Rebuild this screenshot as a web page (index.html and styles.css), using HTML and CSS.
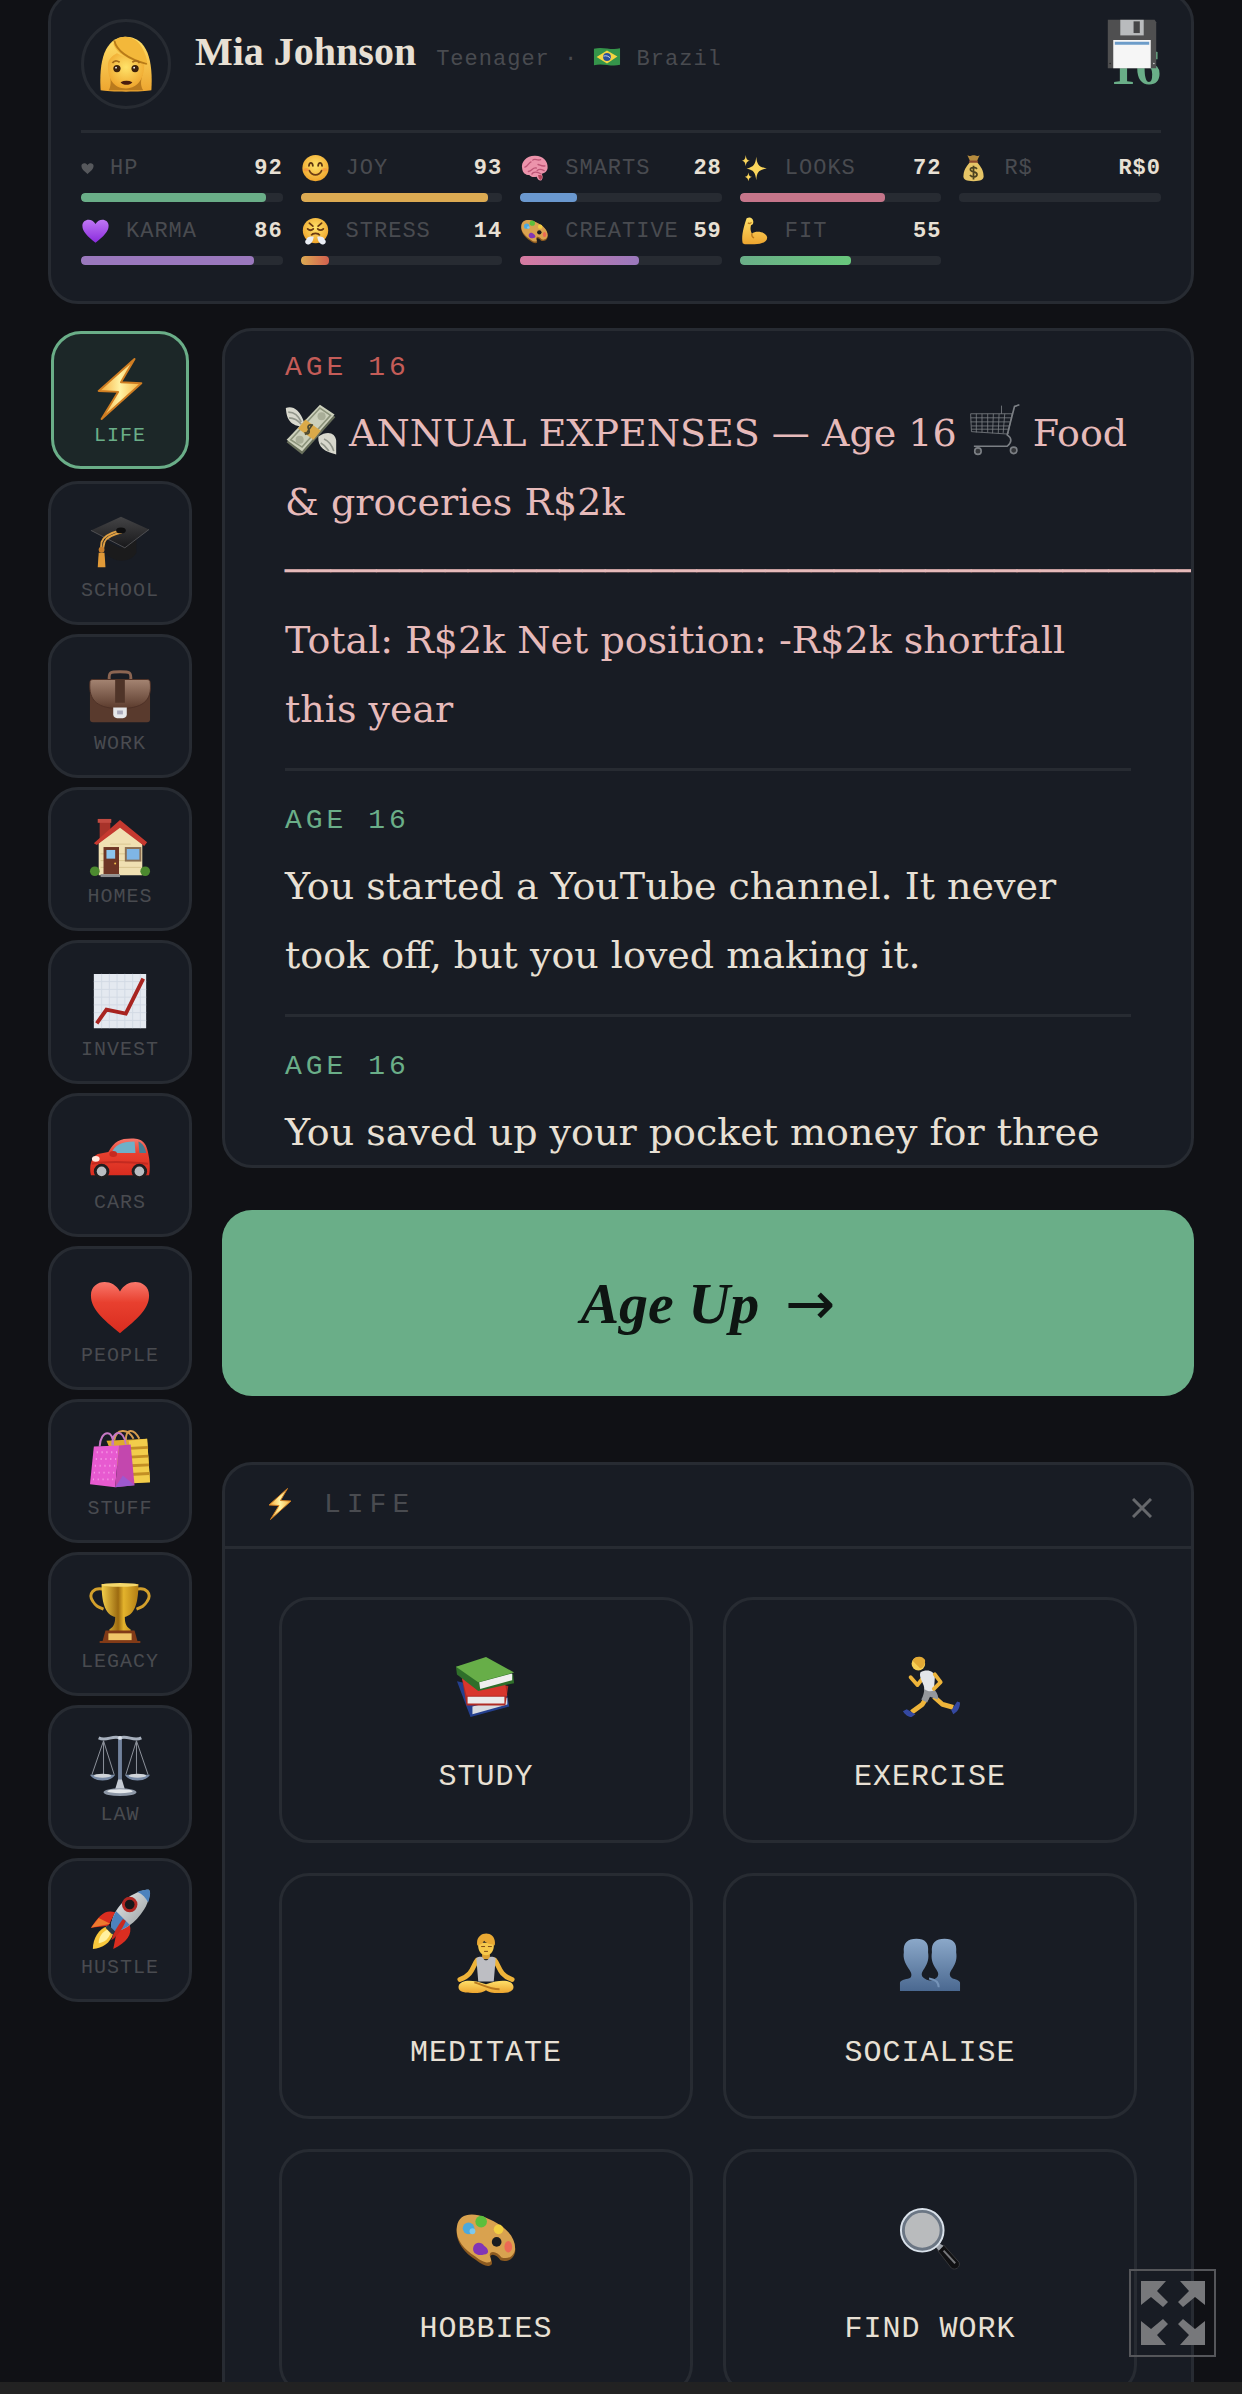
FILE: index.html
```
<!DOCTYPE html>
<html lang="en">
<head>
    <meta charset="UTF-8">
    <meta name="viewport" content="width=device-width, initial-scale=1.0">
    <title>Mia Johnson</title>
    <link rel="stylesheet" href="styles.css">
</head>
<body>

<!-- icon sprite -->
<svg class="sprite" aria-hidden="true">
<defs>
    <linearGradient id="gGold" x1="0" y1="0" x2="0" y2="1"><stop offset="0" stop-color="#ffe069"/><stop offset="1" stop-color="#eda52f"/></linearGradient>
    <linearGradient id="gCup" x1="0" y1="0" x2="1" y2="0"><stop offset="0" stop-color="#f3cf4a"/><stop offset=".45" stop-color="#9c6a10"/><stop offset=".6" stop-color="#e3b32c"/><stop offset="1" stop-color="#b37e14"/></linearGradient>
    <linearGradient id="gRed" x1="0" y1="0" x2="0" y2="1"><stop offset="0" stop-color="#f9776b"/><stop offset=".4" stop-color="#e8402f"/><stop offset="1" stop-color="#d92c1f"/></linearGradient>
    <linearGradient id="gPurple" x1="0" y1="0" x2="0" y2="1"><stop offset="0" stop-color="#c077f5"/><stop offset="1" stop-color="#8a2bdc"/></linearGradient>
    <linearGradient id="gBolt" x1="0" y1="0" x2="1" y2="0"><stop offset="0" stop-color="#f6a834"/><stop offset=".5" stop-color="#fff2a4"/><stop offset="1" stop-color="#f8b23c"/></linearGradient>
    <linearGradient id="gBag" x1="0" y1="0" x2="0" y2="1"><stop offset="0" stop-color="#a48472"/><stop offset="1" stop-color="#5b3b2d"/></linearGradient>
    <linearGradient id="gSteel" x1="0" y1="0" x2="0" y2="1"><stop offset="0" stop-color="#8ba8c9"/><stop offset="1" stop-color="#4a6890"/></linearGradient>
    <linearGradient id="gCap" x1="0" y1="0" x2="0" y2="1"><stop offset="0" stop-color="#444446"/><stop offset="1" stop-color="#18181a"/></linearGradient>
    <linearGradient id="gBody" x1="0" y1="0" x2="1" y2="1"><stop offset="0" stop-color="#f0f2f3"/><stop offset="1" stop-color="#8f9698"/></linearGradient>
    <radialGradient id="gFace" cx=".5" cy=".4" r=".6"><stop offset="0" stop-color="#ffe36a"/><stop offset="1" stop-color="#efa52c"/></radialGradient>
</defs>

<symbol id="i-woman" viewBox="0 0 64 64">
    <path d="M4 61C2 30 8 3 31 2c25 0 31 27 29 59-8 2-48 2-56 0z" fill="url(#gGold)"/>
    <path d="M14 44c2 8 1 13-1 17h38c-3-5-3-10-1-17z" fill="#b97a1d"/>
    <path d="M12 34c0-8 5-11 10-14 10 5 26 9 30 11 1 15-6 28-20 28S12 48 12 34z" fill="url(#gFace)"/>
    <path d="M18 10c3 10 17 18 38 23C53 14 44 2 31 2 23 2 20 5 18 10z" fill="#f3b83a"/>
    <path d="M19 6c3 13 18 21 36 26" fill="none" stroke="#b87b18" stroke-width="2"/>
    <circle cx="22" cy="37" r="4" fill="#3c220c"/><circle cx="42" cy="37" r="4" fill="#3c220c"/>
    <circle cx="21" cy="36" r="1" fill="#fff"/><circle cx="41" cy="36" r="1" fill="#fff"/>
    <path d="M17 31c2-3 5-3 8-1M39 30c3-2 6-2 8 1" fill="none" stroke="#a36a1a" stroke-width="2"/>
    <path d="M26 52c4-2 9-2 13 0-3 4-10 4-13 0z" fill="#4a1d0e"/>
</symbol>
<symbol id="i-flag" viewBox="0 0 64 46">
    <path d="M2 4c20-6 38 4 60-1v38c-22 5-40-5-60 1z" fill="#35944a"/>
    <path d="M8 23 32 8l24 14-24 16z" fill="#f5d442"/><circle cx="32" cy="23" r="9" fill="#2b4f9a"/>
    <path d="M24 21c6-2 12 0 16 5" stroke="#dfe6ee" stroke-width="2" fill="none"/>
</symbol>
<symbol id="i-heart" viewBox="0 0 64 64"><path d="M32 59C14 44 2 34 2 20 2 4 24 1 32 16 40 1 62 4 62 20c0 14-12 24-30 39z"/></symbol>
<symbol id="i-smile" viewBox="0 0 64 64">
    <circle cx="32" cy="32" r="30" fill="url(#gFace)"/>
    <path d="M17 27c1-9 8-9 9 0M38 27c1-9 8-9 9 0" fill="none" stroke="#5b3512" stroke-width="4" stroke-linecap="round"/>
    <path d="M18 38c6 13 22 13 28 0" fill="none" stroke="#6d3d14" stroke-width="4" stroke-linecap="round"/>
    <ellipse cx="11" cy="36" rx="6" ry="4" fill="#f58b3c" opacity=".6"/><ellipse cx="53" cy="36" rx="6" ry="4" fill="#f58b3c" opacity=".6"/>
</symbol>
<symbol id="i-brain" viewBox="0 0 64 64">
    <path d="M4 34C0 18 14 4 32 4c18-1 31 11 30 27 0 8-6 13-14 14 3 4 4 10 0 15-5 2-9-2-11-8-8 2-14 0-17-4C11 48 5 42 4 34z" fill="#ec93ab"/>
    <path d="M10 30c8-2 8-10 14-12M18 40c9-1 9-10 18-8M28 14c5-5 10 2 18-1M40 24c5 1 9 5 16 3M26 46c3-7 14-5 20-1M38 38c4-4 10-3 16 0" fill="none" stroke="#bd5576" stroke-width="3" stroke-linecap="round"/>
    <path d="M40 48c4 0 8 0 9 2 1 5-1 9-4 9-3-2-4-6-5-11z" fill="#b5455b"/>
</symbol>
<symbol id="i-sparkles" viewBox="0 0 64 64" fill="#fbd65c">
    <path d="M36 6c2 18 5 23 24 27-19 4-22 8-24 27-2-19-6-23-22-27 16-4 20-9 22-27z"/>
    <path d="M12 2c1 9 3 12 10 13-7 2-9 5-10 13-1-8-3-11-9-13 6-1 8-4 9-13zM18 42c1 7 3 9 8 10-5 2-7 4-8 10-1-6-3-8-8-10 5-1 7-3 8-10z"/>
</symbol>
<symbol id="i-moneybag" viewBox="0 0 64 64">
    <path d="M24 16 18 3c8 4 9-2 14 0 6-2 8 4 14 0l-6 13z" fill="#b58b3e"/>
    <path d="M24 18h16c10 12 15 20 15 33 0 8-6 11-23 11S9 59 9 51c0-13 5-21 15-33z" fill="#e6c566"/>
    <path d="M22 15h20v5H22z" fill="#8e4a2c"/>
    <path d="M40 34c-4-5-16-4-15 2 1 7 15 3 15 11 0 7-12 7-16 1M32 27v31" fill="none" stroke="#4c4320" stroke-width="4"/>
</symbol>
<symbol id="i-steam" viewBox="0 0 64 64">
    <circle cx="32" cy="31" r="29" fill="url(#gFace)"/>
    <path d="m18 14 8 7M46 14l-8 7M14 27c4 4 9 4 13 0M37 27c4 4 9 4 13 0" fill="none" stroke="#6a3a12" stroke-width="4" stroke-linecap="round"/>
    <path d="M22 42c4-6 16-6 20 0" fill="none" stroke="#6a3a12" stroke-width="4"/>
    <path d="M28 45c-2 12-6 17-14 18-7-2-7-9-2-12-1-5 9-8 16-6zM36 45c2 12 6 17 14 18 7-2 7-9 2-12 1-5-9-8-16-6z" fill="#e9edf4"/>
</symbol>
<symbol id="i-palette" viewBox="0 0 64 64">
    <path d="M2 21C4 8 17 5 32 11c20 8 32 22 30 35-2 8-9 10-15 8-3-4-7-7-10-5-2 2 2 5 1 9-3 4-10 1-16-4C8 45 0 33 2 21z" fill="#8c5a20"/>
    <path d="M2 19C4 6 17 4 32 10c20 8 31 20 30 33-2 8-8 10-14 8-3-4-8-7-11-5-3 3 1 6 0 9-3 3-10 0-16-5C8 42 0 31 2 19z" fill="#d9a24f"/>
    <ellipse cx="43" cy="35" rx="5" ry="5" fill="#1a1c20"/>
    <circle cx="14" cy="21" r="6" fill="#4ba9de"/><circle cx="18" cy="24" r="3" fill="#7cc8ee"/>
    <circle cx="27" cy="14" r="6" fill="#5cbf3c"/><circle cx="45" cy="22" r="5" fill="#f3cf42"/>
    <ellipse cx="55" cy="40" rx="4" ry="6" fill="#ec6a54"/>
    <path d="M19 40c2-6 9-5 11-1 5 3 6 9 0 9-6 2-13-1-11-8z" fill="#8235b5"/>
</symbol>
<symbol id="i-arm" viewBox="0 0 64 64">
    <path d="M14 3c7-4 14-1 15 6 1 5-1 9-5 10-2 8-1 13 2 19 10-8 33-4 35 9 0 11-14 15-29 15-11 0-22 2-27-2C1 45 8 20 14 3z" fill="url(#gGold)"/>
    <path d="M17 13c3 3 6 2 8-1M26 38c-1 5 1 8 5 10" fill="none" stroke="#ba7a1d" stroke-width="3"/>
</symbol>
<symbol id="i-floppy" viewBox="0 0 64 64">
    <path d="M1 1h60l2 3v59H1z" fill="#4f4f50"/>
    <path d="M17 1h30v20H17z" fill="#b9bbbd"/><path d="M34 3h8v15h-8z" fill="#454547"/>
    <path d="M8 27h48v36H8z" fill="#f6f6f6"/><path d="M10 29h44v4H10z" fill="#6c9cc9"/>
    <circle cx="4" cy="57" r="1" fill="#222"/><circle cx="60" cy="57" r="1" fill="#ddd"/>
</symbol>
<symbol id="i-bolt" viewBox="0 0 64 64"><path d="M47 1 10 34l20 1L13 63l41-37-21-1z" fill="url(#gBolt)" stroke="#cf7d22" stroke-width="2" stroke-linejoin="round"/></symbol>
<symbol id="i-gradcap" viewBox="0 0 64 64">
    <path d="M17 31v12c8 11 26 11 32 0V29L32 38z" fill="#1b1b1c"/>
    <path d="M2 20 33 6l29 13-25 19z" fill="url(#gCap)"/>
    <path d="M2 20 37 38 62 19" fill="none" stroke="#505053"/>
    <path d="M32 20c-8 2-17 6-19 12l-1 10M34 22c-8 2-16 5-18 10l-2 9" fill="none" stroke="#e0a043" stroke-width="2"/>
    <ellipse cx="33" cy="20" rx="5" ry="3" fill="#0e0e0f"/>
    <circle cx="13" cy="40" r="3" fill="#c87f2c"/><path d="m10 43-1 15h8l-1-15z" fill="#e19a38"/>
</symbol>
<symbol id="i-briefcase" viewBox="0 0 64 64">
    <path d="M21 17c-1-9 1-9 11-9s12 0 11 9" fill="none" stroke="#8b6552" stroke-width="3"/>
    <rect x="1" y="16" width="62" height="44" rx="3" fill="#593a2d"/>
    <path d="M1 18q0-2 3-2h56q3 0 3 2c3 21-9 28-31 28S-1 39 1 18z" fill="url(#gBag)" stroke="#4d3126"/>
    <path d="M27 16h10v24H27z" fill="#4f3428"/>
    <path d="M25 45h14v7q0 4-7 4t-7-4z" fill="#e6e8ea"/><path d="M29 48h6v4h-6z" fill="#aab"/>
</symbol>
<symbol id="i-house" viewBox="0 0 64 64">
    <path d="M11 3h11v14l-11 9z" fill="#a8332a"/><path d="M9 2h14v4H9z" fill="#c24a40"/>
    <path d="M10 27 32 8l23 20v32H10z" fill="#f0e0b2"/>
    <path d="M12 38h42M12 45h42M12 52h42M22 28h21" stroke="#d9c590"/>
    <path d="M5 27 32 3l28 23-3 4L32 11 8 29z" fill="#c6392f"/>
    <path d="M15 31h16v28H15z" fill="#6e3525"/><path d="M18 34h9v9h-9z" fill="#8cc4ee"/>
    <path d="M37 31h17v15H37z" fill="#8b6f52"/><path d="M39 33h13v11H39z" fill="#7fb6e6"/>
    <circle cx="27" cy="48" r="1" fill="#f2c24b"/>
    <circle cx="6" cy="56" r="5" fill="#4c8a2f"/><circle cx="58" cy="56" r="5" fill="#4c8a2f"/>
    <path d="M12 59h20v3H12z" fill="#8e8e90"/>
</symbol>
<symbol id="i-chart" viewBox="0 0 64 64">
    <path d="M5 4h54v56H5z" fill="#e4e9f0"/>
    <path d="M5 12h54M5 20h54M5 28h54M5 36h54M5 44h54M5 52h54M13 4v56M21 4v56M29 4v56M37 4v56M45 4v56M53 4v56" stroke="#d3dae4"/>
    <path d="m8 55 10-14 20 4L56 9" fill="none" stroke="#a82420" stroke-width="4"/>
</symbol>
<symbol id="i-car" viewBox="0 0 64 64">
    <path d="M2 54c-2-9 0-19 7-22l11-2C26 19 32 16 44 16c12 0 16 5 18 20 1 7 1 14 0 18z" fill="url(#gRed)"/>
    <path d="M23 31c4-8 9-12 24-12l1 12z" fill="#6fb0c8"/><path d="M51 19c5 2 7 7 8 12h-7z" fill="#467f94"/>
    <path d="M3 42c18-3 36-2 58 0" fill="none" stroke="#c32a20" stroke-width="2"/>
    <ellipse cx="7" cy="37" rx="4" ry="3" fill="#ffe8df"/>
    <circle cx="13" cy="50" r="8" fill="#1e1e20"/><circle cx="13" cy="50" r="5" fill="#b9bdc1"/>
    <circle cx="52" cy="50" r="8" fill="#1e1e20"/><circle cx="52" cy="50" r="5" fill="#b9bdc1"/>
    <ellipse cx="25" cy="32" rx="4" ry="3" fill="#c62a20"/>
</symbol>
<symbol id="i-bags" viewBox="0 0 64 64">
    <path d="m18 12 42-2 3 45-26 1z" fill="#dfab2d"/><path d="m41 12 19-2 3 45-17 1z" fill="#f2cd4b"/>
    <path d="m42 20 19-1M42 29l19-1M42 38l20-1M42 47l20-1" stroke="#c38f24" stroke-width="3"/>
    <path d="M26 12c2-13 14-13 20-2M38 12c0-13 8-13 14-2" fill="none" stroke="#d59c4f" stroke-width="2"/>
    <path d="m5 18 26-1-4 43-26-3z" fill="#e75ad0"/><path d="m31 17 12-1 4 42-20 2z" fill="#c347ae"/>
    <path d="m27 60 8-12 12 10z" fill="#9d58cf"/>
    <path d="M8 24h21M7 31h21M6 38h21M5 45h21M4 52h21" stroke="#f9a5ea" stroke-width="2" stroke-dasharray="1 4"/>
    <path d="M11 18c1-18 15-18 14-1M24 17c-1-16 12-18 14-1" fill="none" stroke="#c678c5" stroke-width="2"/>
</symbol>
<symbol id="i-trophy" viewBox="0 0 64 64">
    <path d="M17 8C4 4-1 13 4 20c3 5 6 6 11 8M47 8c13-4 18 5 13 12-3 5-6 6-11 8" fill="none" stroke="#d3a02c" stroke-width="3"/>
    <path d="M13 2h38c0 22-5 32-14 34 0 8 2 10 6 13v4H21v-4c4-3 6-5 6-13-9-2-14-12-14-34z" fill="url(#gCup)"/>
    <ellipse cx="32" cy="3" rx="19" ry="2" fill="#f5d86c"/>
    <path d="M17 50h30l3 11h3v2H11v-2h3z" fill="#813a17"/><path d="M20 53h24v7H20z" fill="#efc568"/>
</symbol>
<symbol id="i-scales" viewBox="0 0 64 64">
    <path d="M10 3c8 4 14-3 22 0 8-3 14 4 22 0" fill="none" stroke="#a7b0bd" stroke-width="3"/>
    <path d="M15 6 3 41M15 6v35M15 6l11 35M49 6 38 41M49 6v35M49 6l12 35" stroke="#8f959e" fill="none"/>
    <path d="M30 4h4v48h-4z" fill="#73839d"/><circle cx="32" cy="3" r="2" fill="#dde3ea"/>
    <path d="M1 41h26c-4 8-22 8-26 0zM37 41h26c-4 8-22 8-26 0z" fill="#788aa5"/>
    <ellipse cx="14" cy="42" rx="9" ry="2" fill="#d1d5d9"/><ellipse cx="50" cy="42" rx="9" ry="2" fill="#d1d5d9"/>
    <path d="M30 46h4l3 10h-10z" fill="#c6ccd4"/><ellipse cx="32" cy="59" rx="17" ry="4" fill="#8e98a7"/><ellipse cx="32" cy="58" rx="13" ry="2" fill="#e5e8eb"/>
</symbol>
<symbol id="i-rocket" viewBox="0 0 64 64">
    <path d="M27 25C16 22 11 28 2 41l18-2zM42 38c3 10-3 18-17 25l4-20z" fill="#da2d20"/>
    <path d="m2 41 8-10 12 6z" fill="#ee7a2e"/>
    <path d="M20 39C10 42 4 52 4 63c10-1 18-6 21-16z" fill="#f8c83c"/><path d="M19 43c-5 2-9 7-9 14 6-1 10-4 12-10z" fill="#fff1a0"/>
    <path d="M23 42c-1-8 4-23 20-34 8-5 18-7 19-6 2 2 0 12-5 20-9 15-22 22-30 23z" fill="url(#gBody)"/>
    <path d="M50 4c6-2 11-3 12-2 2 2 1 7-1 13-2-5-6-9-11-11zM23 42c-1-5 1-11 5-18l14 14c-5 4-11 7-15 7z" fill="#4c82bd"/>
    <circle cx="42" cy="17" r="8" fill="#b12823"/><circle cx="42" cy="17" r="5" fill="#17181a"/>
    <path d="M35 32c-6 8-10 14-12 22 8-6 12-13 15-20z" fill="#c82a20"/>
    <path d="m20 38 7 7-3 3-7-7z" fill="#253848"/>
</symbol>
<symbol id="i-cash" viewBox="0 0 64 64">
    <path d="M24 24C18 5 8 2 1 5c1 11 3 21 20 23zM41 40c12-8 21-4 22 5v17C49 59 40 53 41 40z" fill="#d8d8cd"/>
    <path d="M4 10c8 0 12 4 16 12M5 17c6 0 11 3 15 8M48 43c7 3 10 8 12 15M44 48c6 3 8 7 10 10" fill="none" stroke="#92968b" stroke-width="2"/>
    <path d="M43 3 62 16 21 62 2 47z" fill="#686f5b"/>
    <path d="M43 1 61 13 21 58 2 44z" fill="#ccd0bb"/>
    <path d="M43 5 56 14 21 53 7 44z" fill="none" stroke="#8d947c" stroke-width="2"/>
    <circle cx="45" cy="15" r="5" fill="#a9ae98"/><circle cx="18" cy="44" r="5" fill="#a9ae98"/>
    <path d="m25 19 19 14-9 11-19-14z" fill="#dbaa49"/>
    <path d="M34 27c-4-3-7 0-5 4s0 8-5 4M34 25 25 38" fill="none" stroke="#4c4931" stroke-width="2"/>
</symbol>
<symbol id="i-cart" viewBox="0 0 64 64" fill="none" stroke="#7b7f84">
    <path d="M62 1 56 3 47 38c6 4 6 9 0 14H6" stroke-width="2"/>
    <path d="M2 12h51l-5 25L3 34zM2 17h51M2 22h49M3 27h47M3 31h46M9 12v23M16 12v23M23 12v23M30 12l-1 24M37 12l-1 24M44 12l-2 24M40 12V2"/>
    <circle cx="11" cy="58" r="4" fill="#34363a" stroke-width="2"/><circle cx="55" cy="57" r="4" fill="#34363a" stroke-width="2"/>
</symbol>
<symbol id="i-books" viewBox="0 0 64 64">
    <path d="m2 26 14 37 40-11-3-15z" fill="#243f8e"/><path d="m18 52 36-9v7l-36 10z" fill="#d9dbe0"/>
    <path d="m7 22 5 29 40 0 3-20z" fill="#b02a24"/><path d="m13 42 38 0v7l-38 0z" fill="#ebebec"/><path d="m7 22 5 19h42l-3-16z" fill="#d8362d"/>
    <path d="M1 11 2 19 24 36 61 28 60 19 32 4z" fill="#2f6e2a"/><path d="m25 27 34-9v7l-33 9z" fill="#f0f0ef"/>
    <path d="M1 11 32 1l29 16-37 10z" fill="#67ae48"/>
</symbol>
<symbol id="i-run" viewBox="0 0 64 64">
    <path d="M29 42 24 50l-11 8M36 42l9 8 11 3" fill="none" stroke="#eeb43a" stroke-width="5" stroke-linejoin="round"/>
    <path d="m4 57 4-2 9 5-4 3c-4 0-7-3-9-6zM54 56l6-9 3 1c0 6-3 10-7 12z" fill="#3448a0"/>
    <path d="m26 21-7 9-7-8" fill="none" stroke="#eeb43a" stroke-width="4" stroke-linejoin="round" stroke-linecap="round"/>
    <path d="M22 17c6-4 15-2 15 5l-1 14c-4 2-8 1-10-1 1-6-6-12-4-18z" fill="#e3e5e9"/>
    <path d="M26 34c4 3 8 3 11 1 3 4 4 7 3 10l-8-3-3 6-6-3c2-4 3-7 3-11z" fill="#94979c"/>
    <path d="m37 19 6 8-7 7" fill="none" stroke="#eeb43a" stroke-width="4" stroke-linejoin="round" stroke-linecap="round"/>
    <circle cx="20" cy="8" r="7" fill="#f7cf55"/><path d="M14 5c2-6 12-5 13 0 0 4-2 7-5 8z" fill="#e3aa35"/>
</symbol>
<symbol id="i-meditate" viewBox="0 0 64 64">
    <path d="M23 29c-5 6-4 15-18 20M41 29c5 6 4 15 18 20" fill="none" stroke="#eeb339" stroke-width="5" stroke-linecap="round"/>
    <path d="M28 20h8v8h-8z" fill="#dba133"/><path d="M22 27c3-2 6-2 7 0 2 3 4 3 6 0 1-2 4-2 7 0l-2 24H24z" fill="#bdbec3"/>
    <path d="M4 55c2-5 12-7 28-1 16-6 26-4 28 1 2 6-4 8-14 8-8 0-11-1-14-3-3 2-6 3-14 3-10 0-16-2-14-8z" fill="url(#gGold)"/>
    <path d="M20 52c8 2 15 7 26 7" fill="none" stroke="#b9781f" stroke-width="2"/>
    <path d="M24 11c-1 8 3 13 8 13s9-5 8-13z" fill="#f5c84c"/>
    <path d="M23 14c-3-16 21-17 18 0-2-2-8-1-11-5-1 3-4 4-7 5z" fill="#e9a934"/>
    <path d="M27 15h4M34 15h4M30 20h4" stroke="#7b4716"/>
</symbol>
<symbol id="i-people" viewBox="0 0 64 64" fill="url(#gSteel)">
    <path d="M1 61V52c1-3 8-3 11-5 2-3 0-6-2-9C6 32 4 27 5 21 4 11 9 7 18 7s13 4 12 14c1 6 0 11-4 17-2 3-4 6-1 9 5 4 9 4 14 0 3-3 1-6-1-9-4-6-5-11-4-17C33 11 38 7 47 7s13 4 12 14c1 6 0 11-4 17-2 3-4 6-1 9 2 2 8 2 9 5v9z"/>
    <path d="M31 48c7 1 10 4 10 9" stroke="#7593b8" stroke-width="2" fill="none"/>
</symbol>
<symbol id="i-search" viewBox="0 0 64 64">
    <path d="m40 44 6-6 16 18c2 5-4 9-8 6z" fill="#101012" stroke="#36373a"/><path d="m46 44 12 13" stroke="#77787b" stroke-width="2"/>
    <path d="m36 38 3-3 7 4-5 5z" fill="#9da2aa"/>
    <circle cx="24" cy="23" r="20" fill="#b9bbbd" stroke="#6b7684" stroke-width="4"/><circle cx="24" cy="23" r="22" fill="none" stroke="#d9e1ea" stroke-width="2"/>
</symbol>
<symbol id="i-close" viewBox="0 0 20 20"><path d="m1 1 18 18M19 1 1 19" fill="none" stroke="currentColor" stroke-width="3"/></symbol>
<symbol id="i-expand" viewBox="0 0 64 64" fill="currentColor">
    <path d="M0 0h25l-9 10 11 11-5 5-12-10L0 24zM64 0H39l9 10-11 11 5 5 12-10 10 8zM0 64h25l-9-10 11-11-5-5-12 10L0 40zM64 64H39l9-10-11-11 5-5 12 10 10-8z"/>
</symbol>
</svg>

<div class="page">

<header class="profile">
    <div class="profile-top">
        <div class="avatar"><svg><use href="#i-woman"/></svg></div>
        <div class="identity">
            <h1>Mia Johnson</h1>
            <p>Teenager · <svg class="flag"><use href="#i-flag"/></svg> Brazil</p>
        </div>
        <span class="age">16</span>
        <button class="save" aria-label="Save"><svg><use href="#i-floppy"/></svg></button>
    </div>
    <div class="stats">
        <div class="stat">
            <div class="stat-row"><svg class="small"><use href="#i-heart"/></svg><span>HP</span><b>92</b></div>
            <div class="bar"><div class="fill green" style="width:92%"></div></div>
        </div>
        <div class="stat">
            <div class="stat-row"><svg><use href="#i-smile"/></svg><span>JOY</span><b>93</b></div>
            <div class="bar"><div class="fill gold" style="width:93%"></div></div>
        </div>
        <div class="stat">
            <div class="stat-row"><svg><use href="#i-brain"/></svg><span>SMARTS</span><b>28</b></div>
            <div class="bar"><div class="fill blue" style="width:28%"></div></div>
        </div>
        <div class="stat">
            <div class="stat-row"><svg><use href="#i-sparkles"/></svg><span>LOOKS</span><b>72</b></div>
            <div class="bar"><div class="fill rose" style="width:72%"></div></div>
        </div>
        <div class="stat">
            <div class="stat-row"><svg><use href="#i-moneybag"/></svg><span>R$</span><b>R$0</b></div>
            <div class="bar"></div>
        </div>
        <div class="stat">
            <div class="stat-row"><svg fill="url(#gPurple)"><use href="#i-heart"/></svg><span>KARMA</span><b>86</b></div>
            <div class="bar"><div class="fill purple" style="width:86%"></div></div>
        </div>
        <div class="stat">
            <div class="stat-row"><svg><use href="#i-steam"/></svg><span>STRESS</span><b>14</b></div>
            <div class="bar"><div class="fill stress" style="width:14%"></div></div>
        </div>
        <div class="stat">
            <div class="stat-row"><svg><use href="#i-palette"/></svg><span>CREATIVE</span><b>59</b></div>
            <div class="bar"><div class="fill creative" style="width:59%"></div></div>
        </div>
        <div class="stat">
            <div class="stat-row"><svg><use href="#i-arm"/></svg><span>FIT</span><b>55</b></div>
            <div class="bar"><div class="fill fit" style="width:55%"></div></div>
        </div>
    </div>
</header>

<div class="layout">

<nav class="sidebar">
    <button class="tab active"><svg><use href="#i-bolt"/></svg>LIFE</button>
    <button class="tab"><svg><use href="#i-gradcap"/></svg>SCHOOL</button>
    <button class="tab"><svg><use href="#i-briefcase"/></svg>WORK</button>
    <button class="tab"><svg><use href="#i-house"/></svg>HOMES</button>
    <button class="tab"><svg><use href="#i-chart"/></svg>INVEST</button>
    <button class="tab"><svg><use href="#i-car"/></svg>CARS</button>
    <button class="tab"><svg fill="url(#gRed)"><use href="#i-heart"/></svg>PEOPLE</button>
    <button class="tab"><svg><use href="#i-bags"/></svg>STUFF</button>
    <button class="tab"><svg><use href="#i-trophy"/></svg>LEGACY</button>
    <button class="tab"><svg><use href="#i-scales"/></svg>LAW</button>
    <button class="tab"><svg><use href="#i-rocket"/></svg>HUSTLE</button>
</nav>

<main class="content">
    <section class="log">
        <article class="entry bad">
            <h2>AGE 16</h2>
            <p><svg><use href="#i-cash"/></svg> ANNUAL EXPENSES — Age 16 <svg><use href="#i-cart"/></svg> Food &amp; groceries R$2k ──────────────────────────────────────── Total: R$2k Net position: -R$2k shortfall this year</p>
        </article>
        <article class="entry">
            <h2>AGE 16</h2>
            <p>You started a YouTube channel. It never took off, but you loved making it.</p>
        </article>
        <article class="entry">
            <h2>AGE 16</h2>
            <p>You saved up your pocket money for three</p>
        </article>
    </section>

    <button class="age-up">Age Up <span class="arrow">→</span></button>

    <section class="panel">
        <div class="panel-head">
            <svg><use href="#i-bolt"/></svg>
            <h2>LIFE</h2>
            <button class="close" aria-label="Close"><svg><use href="#i-close"/></svg></button>
        </div>
        <div class="actions">
            <button class="action"><svg><use href="#i-books"/></svg>STUDY</button>
            <button class="action"><svg><use href="#i-run"/></svg>EXERCISE</button>
            <button class="action"><svg><use href="#i-meditate"/></svg>MEDITATE</button>
            <button class="action"><svg><use href="#i-people"/></svg>SOCIALISE</button>
            <button class="action"><svg><use href="#i-palette"/></svg>HOBBIES</button>
            <button class="action"><svg><use href="#i-search"/></svg>FIND WORK</button>
        </div>
    </section>
</main>

</div>
</div>

<button class="fullscreen" aria-label="Fullscreen"><svg><use href="#i-expand"/></svg></button>
<div class="bottom-strip"></div>

</body>
</html>
```
FILE: styles.css
```
:root{
    --bg: #101115;
    --card: #181c24;
    --line: #272b32;
    --muted: #494b50;
    --text: #e8e0d4;
    --green: #6aae88;
    --mono: "Liberation Mono", "Courier New", monospace;
    --serif: "Liberation Serif", "Times New Roman", serif;
    --story: "DejaVu Serif", Georgia, serif;
}

*{
    padding: 0;
    margin: 0;
    box-sizing: border-box;
}

body{
    height: 100vh;
    overflow: hidden;
    background: var(--bg);
    color: var(--text);
    font-family: var(--mono);
}

button{
    font: inherit;
    color: inherit;
    background: none;
    border: none;
    cursor: pointer;
}

.sprite{
    position: absolute;
    width: 0;
    height: 0;
}

.page{
    margin-top: -8px;
    padding: 0 48px;
}

/* profile card */
.profile{
    padding: 24px 30px 36px;
    background: var(--card);
    border: 3px solid var(--line);
    border-radius: 30px;
}

.profile-top{
    position: relative;
    display: flex;
    align-items: flex-start;
    gap: 24px;
    padding-bottom: 21px;
    border-bottom: 3px solid var(--line);
}

.avatar{
    display: flex;
    align-items: center;
    justify-content: center;
    width: 90px;
    height: 90px;
    border: 3px solid var(--line);
    border-radius: 50%;
}

.avatar svg{
    width: 58px;
    height: 58px;
}

.identity{
    display: flex;
    flex: 1;
    align-items: baseline;
    gap: 20px;
    padding-top: 9px;
}

.identity h1{
    font: bold 40px/48px var(--serif);
}

.identity p{
    font-size: 22px;
    letter-spacing: 1px;
    color: var(--muted);
}

.flag{
    width: 30px;
    height: 20px;
    vertical-align: -2px;
}

.age{
    padding-top: 18px;
    font: bold 51px/60px var(--serif);
    color: var(--green);
}

.save{
    position: absolute;
    top: 0;
    right: 4px;
}

.save svg{
    display: block;
    width: 50px;
    height: 50px;
}

.stats{
    display: grid;
    grid-template-columns: repeat(5, 1fr);
    gap: 14px 18px;
    padding-top: 20px;
}

.stat-row{
    display: flex;
    align-items: center;
    height: 30px;
    margin-bottom: 10px;
    font-size: 22px;
    letter-spacing: 1px;
    color: var(--muted);
}

.stat-row svg{
    width: 29px;
    height: 28px;
    margin-right: 16px;
}

.stat-row .small{
    width: 13px;
    height: 13px;
    fill: #56585c;
}

.stat-row b{
    margin-left: auto;
    color: var(--text);
}

.bar{
    height: 9px;
    background: var(--line);
    border-radius: 4px;
    overflow: hidden;
}

.fill{
    height: 100%;
    border-radius: 4px;
}

.green{ background: var(--green); }
.gold{ background: #dcaa52; }
.blue{ background: #6a98cf; }
.rose{ background: #c5758a; }
.purple{ background: #9a78bd; }
.stress{ background: linear-gradient(90deg, #dcaa52, #d2604f); }
.creative{ background: linear-gradient(90deg, #d67aa0, #9a78bd); }
.fit{ background: linear-gradient(90deg, #6aae88, #68c77c); }

.layout{
    display: flex;
    align-items: flex-start;
    gap: 30px;
    padding-top: 24px;
}

/* sidebar */
.sidebar{
    display: flex;
    flex-direction: column;
    gap: 9px;
    width: 144px;
}

.tab{
    display: flex;
    flex-direction: column;
    align-items: center;
    gap: 6px;
    height: 144px;
    padding-top: 27px;
    background: var(--card);
    border: 3px solid var(--line);
    border-radius: 30px;
    font-size: 20px;
    line-height: 24px;
    letter-spacing: 1px;
    color: var(--muted);
}

.tab svg{
    width: 62px;
    height: 62px;
}

.tab.active{
    gap: 4px;
    height: 138px;
    margin: 3px;
    padding-top: 24px;
    background: #1c2728;
    border-color: var(--green);
    color: var(--green);
}

/* life log */
.content{
    flex: 1;
    min-width: 0;
}

.log{
    height: 840px;
    padding: 0 60px;
    background: var(--card);
    border: 3px solid var(--line);
    border-radius: 30px;
    overflow: hidden;
}

.entry{
    padding: 27px 0 24px;
    border-bottom: 3px solid var(--line);
}

.entry:first-child{
    padding-top: 14px;
}

.entry h2{
    margin-bottom: 9px;
    font-size: 28px;
    font-weight: normal;
    line-height: 45px;
    letter-spacing: 4px;
    color: var(--green);
}

.entry p{
    font: 38px/69px var(--story);
}

.entry p svg{
    width: 52px;
    height: 52px;
    vertical-align: -10px;
}

.bad h2{
    color: #c45c58;
}

.bad p{
    color: #e6baba;
}

.age-up{
    display: flex;
    align-items: center;
    justify-content: center;
    gap: 26px;
    width: 100%;
    height: 186px;
    margin: 42px 0 66px;
    background: var(--green);
    border-radius: 30px;
    font: italic bold 58px/69px var(--serif);
    color: #0e1512;
}

.arrow{
    font: 60px/69px "DejaVu Sans", sans-serif;
}

/* actions */
.panel{
    background: var(--card);
    border: 3px solid var(--line);
    border-radius: 30px;
}

.panel-head{
    display: flex;
    align-items: center;
    height: 84px;
    padding: 0 39px 3px;
    border-bottom: 3px solid var(--line);
    color: var(--muted);
}

.panel-head > svg{
    width: 32px;
    height: 34px;
}

.panel-head h2{
    flex: 1;
    padding-left: 28px;
    font-size: 28px;
    font-weight: normal;
    letter-spacing: 6px;
}

.close{
    padding-top: 8px;
    color: #66686c;
}

.close svg{
    display: block;
    width: 20px;
    height: 20px;
}

.actions{
    display: grid;
    grid-template-columns: 1fr 1fr;
    gap: 30px;
    padding: 48px 54px;
}

.action{
    display: flex;
    flex-direction: column;
    align-items: center;
    gap: 41px;
    height: 246px;
    padding-top: 56px;
    border: 3px solid var(--line);
    border-radius: 30px;
    font-size: 30px;
    line-height: 36px;
    letter-spacing: 1px;
}

.action svg{
    width: 64px;
    height: 62px;
}

.fullscreen{
    position: fixed;
    right: 26px;
    bottom: 37px;
    width: 87px;
    height: 88px;
    padding: 10px;
    border: 2px solid #55565a;
    color: #77787b;
}

.fullscreen svg{
    display: block;
    width: 64px;
    height: 64px;
}

.bottom-strip{
    position: fixed;
    left: 0;
    right: 0;
    bottom: 0;
    height: 12px;
    background: #222;
}
```
